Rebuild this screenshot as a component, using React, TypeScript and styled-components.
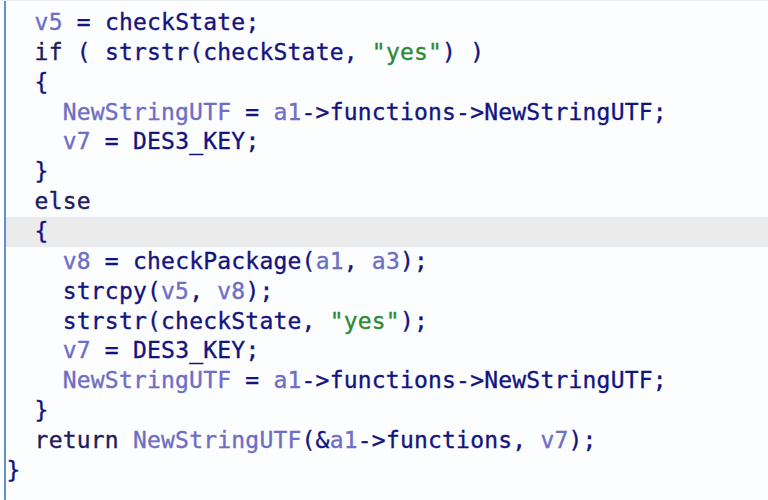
import React from "react";
import styled, { createGlobalStyle } from "styled-components";

const Global = createGlobalStyle`
  html, body { margin: 0; padding: 0; background: #fcfdff; }
  #root { width: 768px; height: 500px; }
`;

const Editor = styled.div`
  width: 768px;
  height: 500px;
  box-sizing: border-box;
  background: #fcfdff;
  padding-left: 4px;
  border-top: 1px solid #eceef2;
  overflow: hidden;
`;

const Pane = styled.div`
  height: 100%;
  border-left: 2px solid #5f93cf;
  padding-top: 7px;
  font-family: "DejaVu Sans Mono", "Liberation Mono", monospace;
  font-size: 23px;
  letter-spacing: 0.2px;
  -webkit-text-stroke: 0.35px currentColor;
`;

const Line = styled.div<{ $indent: number; $active?: boolean }>`
  height: 29.87px;
  line-height: 29.87px;
  white-space: pre;
  padding-left: calc(0.5px + ${(p) => p.$indent * 2}ch + ${(p) => p.$indent * 0.4}px);
  background: ${(p) => (p.$active ? "#ebebeb" : "transparent")};
  color: #14147e;
`;

const Tok = styled.span<{ $kind: "v" | "n" | "k" | "s" }>`
  color: ${(p) =>
    p.$kind === "v"
      ? "#6e6ec4"
      : p.$kind === "k"
      ? "#1c1c5c"
      : p.$kind === "s"
      ? "#2f8a36"
      : "#14147e"};
`;

const VARS = new Set(["v5", "v7", "v8", "a1", "a3", "NewStringUTF"]);
const KEYWORDS = new Set(["if", "else", "return"]);

function tokenize(src: string) {
  const out: { t: string; k: "v" | "n" | "k" | "s" }[] = [];
  const re = /("[^"]*")|([A-Za-z_][A-Za-z0-9_]*)|(\s+)|(->)|(.)/g;
  let m: RegExpExecArray | null;
  let prev = "";
  while ((m = re.exec(src))) {
    const t = m[0];
    if (m[1]) out.push({ t, k: "s" });
    else if (m[2]) {
      if (KEYWORDS.has(t)) out.push({ t, k: "k" });
      else if (VARS.has(t) && prev !== "->") out.push({ t, k: "v" });
      else out.push({ t, k: "n" });
    } else out.push({ t, k: "n" });
    if (!m[3]) prev = t;
  }
  return out;
}

const CODE: { indent: number; text: string; active?: boolean }[] = [
  { indent: 1, text: "v5 = checkState;" },
  { indent: 1, text: 'if ( strstr(checkState, "yes") )' },
  { indent: 1, text: "{" },
  { indent: 2, text: "NewStringUTF = a1->functions->NewStringUTF;" },
  { indent: 2, text: "v7 = DES3_KEY;" },
  { indent: 1, text: "}" },
  { indent: 1, text: "else" },
  { indent: 1, text: "{", active: true },
  { indent: 2, text: "v8 = checkPackage(a1, a3);" },
  { indent: 2, text: "strcpy(v5, v8);" },
  { indent: 2, text: 'strstr(checkState, "yes");' },
  { indent: 2, text: "v7 = DES3_KEY;" },
  { indent: 2, text: "NewStringUTF = a1->functions->NewStringUTF;" },
  { indent: 1, text: "}" },
  { indent: 1, text: "return NewStringUTF(&a1->functions, v7);" },
  { indent: 0, text: "}" },
];

export default function App() {
  return (
    <>
      <Global />
      <Editor>
        <Pane>
          {CODE.map((line, i) => (
            <Line key={i} $indent={line.indent} $active={line.active}>
              {tokenize(line.text).map((tk, j) => (
                <Tok key={j} $kind={tk.k}>
                  {tk.t}
                </Tok>
              ))}
            </Line>
          ))}
        </Pane>
      </Editor>
    </>
  );
}
